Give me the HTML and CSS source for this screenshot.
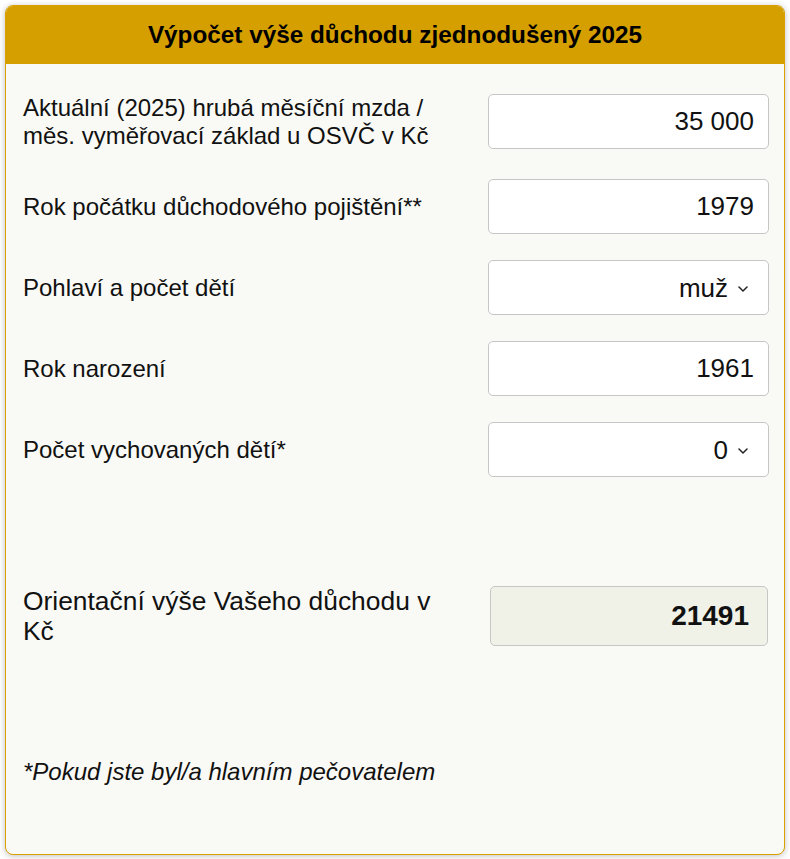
FILE: index.html
```html
<!DOCTYPE html>
<html lang="cs">

<head>
    <meta charset="UTF-8">
    <meta name="viewport" content="width=device-width, initial-scale=1.0">
    <title>Výpočet výše důchodu zjednodušený 2025</title>
    <link rel="stylesheet" href="styles.css">
</head>

<body>
    <div class="calc-card">
        <div class="calc-header">
            <h1>Výpočet výše důchodu zjednodušený 2025</h1>
        </div>

        <form class="calc-body" id="calcForm" onsubmit="return false">
            <!-- Inputs -->
            <div class="form-row row-tall">
                <label for="mzda">Aktuální (2025) hrubá měsíční mzda / měs. vyměřovací základ u OSVČ v Kč</label>
                <input type="text" id="mzda" class="form-control" value="35 000">
            </div>
            <div class="form-row">
                <label for="pocatek">Rok počátku důchodového pojištění**</label>
                <input type="text" id="pocatek" class="form-control" value="1979">
            </div>
            <div class="form-row">
                <label for="pohlavi">Pohlaví a počet dětí</label>
                <div class="select-wrap">
                    <select id="pohlavi" class="form-control">
                        <option value="muz" selected>muž</option>
                        <option value="zena">žena</option>
                    </select>
                    <svg class="select-arrow" width="10" height="6" viewBox="0 0 10 6">
                        <path d="M1 1l4 4 4-4" fill="none" stroke="#222" stroke-width="1.5" stroke-linecap="round" stroke-linejoin="round" />
                    </svg>
                </div>
            </div>
            <div class="form-row">
                <label for="narozeni">Rok narození</label>
                <input type="text" id="narozeni" class="form-control" value="1961">
            </div>
            <div class="form-row">
                <label for="deti">Počet vychovaných dětí*</label>
                <div class="select-wrap">
                    <select id="deti" class="form-control">
                        <option value="0" selected>0</option>
                        <option value="1">1</option>
                        <option value="2">2</option>
                        <option value="3">3</option>
                        <option value="4">4</option>
                    </select>
                    <svg class="select-arrow" width="10" height="6" viewBox="0 0 10 6">
                        <path d="M1 1l4 4 4-4" fill="none" stroke="#222" stroke-width="1.5" stroke-linecap="round" stroke-linejoin="round" />
                    </svg>
                </div>
            </div>

            <!-- Result -->
            <div class="form-row result-row">
                <div class="result-label">Orientační výše Vašeho důchodu v Kč</div>
                <div class="result-box" id="vysledek">21491</div>
            </div>

            <p class="note">*Pokud jste byl/a hlavním pečovatelem</p>
        </form>
    </div>
</body>

</html>
```

FILE: styles.css
```css
/* Global Styles */
:root {
    --gold-color: #d59f00;
    --border-color: #d9a000;
    --card-bg: #f9f9f5;
    --result-bg: #f0f1e7;
    --input-border: #c6c6c6;
    --text-color: #111;
}

* {
    margin: 0;
    padding: 0;
    box-sizing: border-box;
    font-family: 'Liberation Sans', Arial, sans-serif;
}

body {
    background-color: #fff;
    padding: 5px;
    color: var(--text-color);
}

.calc-card {
    background-color: var(--card-bg);
    border: 1px solid var(--border-color);
    border-radius: 8px;
    box-shadow: 0 1px 6px rgba(0, 0, 0, 0.25);
    overflow: hidden;
}

.calc-header {
    background-color: var(--gold-color);
    height: 58px;
    display: flex;
    align-items: center;
    justify-content: center;
}

.calc-header h1 {
    font-size: 24.3px;
    font-weight: bold;
    color: #000;
}

.calc-body {
    padding: 30px 15px 68px 17px;
}

.form-row {
    display: grid;
    grid-template-columns: 1fr 281px;
    align-items: center;
    margin-bottom: 26px;
}

.form-row.row-tall {
    margin-bottom: 30px;
}

.form-row label,
.result-label {
    max-width: 440px;
    font-size: 24px;
    line-height: 27.5px;
}

.form-control {
    width: 100%;
    height: 55px;
    padding: 0 14px;
    border: 1px solid var(--input-border);
    border-radius: 5px;
    background-color: #fff;
    font-size: 26px;
    color: var(--text-color);
    text-align: right;
    outline: none;
}

.select-wrap {
    position: relative;
}

.select-wrap select {
    appearance: none;
    -webkit-appearance: none;
    text-align-last: right;
    padding-right: 40px;
}

.select-arrow {
    position: absolute;
    right: 21px;
    top: 26px;
    pointer-events: none;
}

/* Result */
.result-row {
    margin-top: 109px;
    margin-bottom: 0;
}

.result-label {
    font-size: 26.4px;
    line-height: 30px;
}

.result-box {
    justify-self: end;
    width: 278px;
    height: 60px;
    margin-right: 1px;
    padding-right: 18px;
    display: flex;
    align-items: center;
    justify-content: flex-end;
    background-color: var(--result-bg);
    border: 1px solid var(--input-border);
    border-radius: 5px;
    font-size: 28px;
    font-weight: bold;
}

.note {
    margin-top: 112px;
    font-size: 24px;
    font-style: italic;
    line-height: 27.5px;
}
```
